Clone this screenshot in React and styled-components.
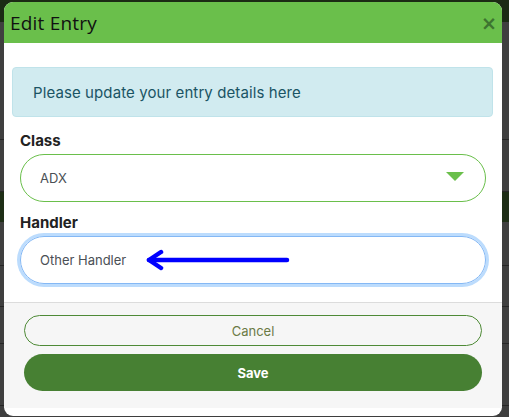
import styled, { createGlobalStyle } from "styled-components"

const GlobalStyle = createGlobalStyle`
  html, body {
    margin: 0;
    padding: 0;
  }
  body {
    font-family: Inter, Roboto, "Liberation Sans", sans-serif;
    background: #3e3e3e;
  }
  * {
    box-sizing: border-box;
  }
`

export default function App() {
  return (
    <>
      <GlobalStyle />
      <Page>
        <TopBar />
        <BgRow h={118} />
        <BgRow h={52} />
        <BgBand />
        <BgRow h={44} />
        <BgRow h={41} />
        <BgRow h={37} />
        <BgRow h={62} />
      </Page>

      <Modal>
        <Header>
          <h1>Edit Entry</h1>
          <Close>×</Close>
        </Header>

        <Body>
          <Alert>Please update your entry details here</Alert>

          <Group>
            <Label>Class</Label>
            <SelectBox>
              <span>ADX</span>
              <Caret />
            </SelectBox>
          </Group>

          <Group>
            <Label>Handler</Label>
            <InputBox>
              <span>Other Handler</span>
              <Arrow width="146" height="22" viewBox="0 0 146 22">
                <path d="M4 11 H142" stroke="#0000ff" strokeWidth="4.5" strokeLinecap="round" fill="none" />
                <path d="M16 3 L4 11 L16 19" stroke="#0000ff" strokeWidth="4.5" strokeLinecap="round" strokeLinejoin="round" fill="none" />
              </Arrow>
            </InputBox>
          </Group>
        </Body>

        <Footer>
          <CancelButton>Cancel</CancelButton>
          <SaveButton>Save</SaveButton>
        </Footer>
      </Modal>
    </>
  )
}

const Page = styled.div`
  height: 417px;
  display: flex;
  flex-direction: column;
  overflow: hidden;
`
const TopBar = styled.div`
  height: 22px;
  background: #1b2b14;
`
const BgRow = styled.div`
  height: ${(props) => props.h}px;
  flex-shrink: 0;
  border-bottom: 1px solid #262626;
  background: #3f3f3f;
`
const BgBand = styled.div`
  height: 30px;
  flex-shrink: 0;
  background: #1e2e16;
`

const Modal = styled.div`
  position: absolute;
  top: 2px;
  left: 4px;
  width: 498px;
  height: 414px;
  background: #ffffff;
  border-radius: 9px;
  overflow: hidden;
  display: flex;
  flex-direction: column;
`
const Header = styled.header`
  height: 41px;
  flex-shrink: 0;
  background: #6abf4b;
  display: flex;
  align-items: center;
  justify-content: space-between;
  padding: 0 5px 0 6px;

  h1 {
    margin: 0;
    font-family: "Open Sans", "Noto Sans", sans-serif;
    font-weight: 400;
    font-size: 19px;
    color: #111;
    letter-spacing: 0.2px;
  }
`
const Close = styled.span`
  font-family: "DejaVu Sans", sans-serif;
  font-size: 19px;
  font-weight: 700;
  color: #3d7430;
  line-height: 1;
  margin-top: 1px;
`
const Body = styled.section`
  flex: 1;
  padding: 24px 9px 0 8px;
  display: flex;
  flex-direction: column;
`
const Alert = styled.div`
  height: 50px;
  display: flex;
  align-items: center;
  padding: 0 20px;
  background: #d1ebf0;
  border: 1px solid #c0e3ea;
  border-radius: 4px;
  color: #1a5464;
  font-size: 15px;
  letter-spacing: 0.1px;
`
const Group = styled.div`
  padding: 0 7px 0 8px;
  margin-top: 15px;
  display: flex;
  flex-direction: column;

  & + & {
    margin-top: 12px;
  }
`
const Label = styled.label`
  font-size: 15px;
  font-weight: 700;
  color: #222;
  margin-bottom: 4px;
  line-height: 18px;
`
const SelectBox = styled.div`
  height: 48px;
  border: 1px solid #6abf4b;
  border-radius: 24px;
  display: flex;
  align-items: center;
  justify-content: space-between;
  padding: 0 21px 0 19px;
  font-size: 13px;
  color: #4a4f55;
`
const Caret = styled.span`
  width: 0;
  height: 0;
  border-left: 9px solid transparent;
  border-right: 9px solid transparent;
  border-top: 9px solid #6abf4b;
  margin-top: -4px;
`
const InputBox = styled.div`
  position: relative;
  height: 48px;
  border: 1px solid #84b8f5;
  border-radius: 24px;
  box-shadow: 0 0 0 3px #bcdcfd;
  display: flex;
  align-items: center;
  padding: 0 19px;
  font-size: 13px;
  color: #4a4f55;
`
const Arrow = styled.svg`
  position: absolute;
  left: 124px;
  top: 12px;
`
const Footer = styled.footer`
  flex-shrink: 0;
  margin-bottom: 8px;
  background: #f6f6f6;
  border-top: 1px solid #dcdcdc;
  padding: 12px 20px 17px 20px;
  display: flex;
  flex-direction: column;
  gap: 8px;
`
const CancelButton = styled.button`
  height: 31px;
  border: 1px solid #4e8a36;
  border-radius: 16px;
  background: transparent;
  color: #6b7a45;
  font-family: Inter, Roboto, "Liberation Sans", sans-serif;
  font-size: 13px;
`
const SaveButton = styled.button`
  height: 37px;
  border: none;
  border-radius: 19px;
  background: #478033;
  color: #fff;
  font-family: Inter, Roboto, "Liberation Sans", sans-serif;
  font-size: 13px;
  font-weight: 700;
`
